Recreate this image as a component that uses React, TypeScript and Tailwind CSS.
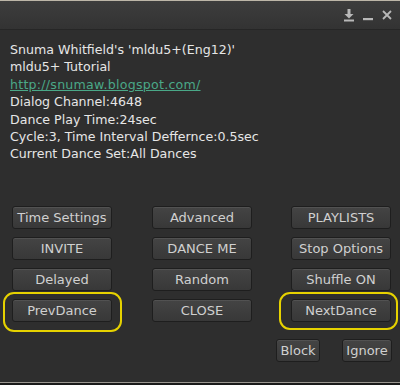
import React from "react";

const font = { fontFamily: '"DejaVu Sans", "Liberation Sans", sans-serif' };

function Btn({ label, w = "w-[100px]" }: { label: string; w?: string }) {
  return (
    <div
      className={`${w} h-[23px] rounded-[3px] border border-[#1e1e1e] bg-gradient-to-b from-[#444444] to-[#383838] shadow-[inset_0_1px_0_rgba(255,255,255,0.08)] flex items-center justify-center text-[13px] text-[#d0d0d0]`}
    >
      {label}
    </div>
  );
}

export default function App() {
  return (
    <div
      className="w-[400px] h-[385px] bg-[#2e2e2e] flex flex-col overflow-hidden relative"
      style={font}
    >
      <div className="h-[1px] bg-[#bdb6a8]" />
      <div className="h-[29px] bg-gradient-to-b from-[#3d3d3d] to-[#333333] border-b border-[#262626] flex items-center justify-end gap-[7px] pr-[7px]">
        <svg width="12" height="14" viewBox="0 0 12 14">
          <rect x="4.5" y="1" width="3" height="5" fill="#b8b8b8" />
          <path d="M1.5 6 L10.5 6 L6 10.5 Z" fill="#b8b8b8" />
          <rect x="1" y="11.5" width="10" height="2" fill="#b8b8b8" />
        </svg>
        <svg width="12" height="14" viewBox="0 0 12 14">
          <rect x="1" y="10" width="10" height="2.2" fill="#b8b8b8" />
        </svg>
        <svg width="12" height="14" viewBox="0 0 12 14">
          <path d="M2 3 L10 11 M10 3 L2 11" stroke="#b8b8b8" strokeWidth="1.8" />
        </svg>
      </div>

      <div className="pl-[10px] pt-[11px] text-[12.6px] leading-[17.4px] text-[#e6e6e6]">
        <div>Snuma Whitfield's 'mldu5+(Eng12)'</div>
        <div>mldu5+ Tutorial</div>
        <div className="text-[#4aa888] underline tracking-[0.25px]">http://snumaw.blogspot.com/</div>
        <div>Dialog Channel:4648</div>
        <div>Dance Play Time:24sec</div>
        <div>Cycle:3, Time Interval Deffernce:0.5sec</div>
        <div>Current Dance Set:All Dances</div>
      </div>

      <div className="mt-[43px] pl-[12px] grid grid-cols-[100px_100px_100px] gap-x-[40px] gap-y-[8px]">
        <Btn label="Time Settings" />
        <Btn label="Advanced" />
        <div className="-ml-[1px]"><Btn label="PLAYLISTS" /></div>
        <Btn label="INVITE" />
        <Btn label="DANCE ME" />
        <div className="-ml-[1px]"><Btn label="Stop Options" /></div>
        <Btn label="Delayed" />
        <Btn label="Random" />
        <div className="-ml-[1px]"><Btn label="Shuffle ON" /></div>
        <div className="relative">
          <Btn label="PrevDance" />
          <span className="absolute left-[-9px] right-[-10px] top-[-7px] bottom-[-10px] rounded-[11px] border-2 border-[#e6d200]" />
        </div>
        <Btn label="CLOSE" />
        <div className="relative -ml-[1px]">
          <Btn label="NextDance" />
          <span className="absolute left-[-12px] right-[-6px] top-[-7px] bottom-[-8px] rounded-[11px] border-2 border-[#e6d200]" />
        </div>
      </div>

      <div className="mt-[17px] pr-[8px] flex justify-end gap-[22px]">
        <Btn label="Block" w="w-[44px]" />
        <Btn label="Ignore" w="w-[50px]" />
      </div>

      <div className="absolute left-0 right-0 top-[382px] h-[1px] bg-[#9a9690]" />
      <div className="absolute left-0 right-0 top-[383px] h-[2px] bg-[#1a1a1a]" />
    </div>
  );
}
